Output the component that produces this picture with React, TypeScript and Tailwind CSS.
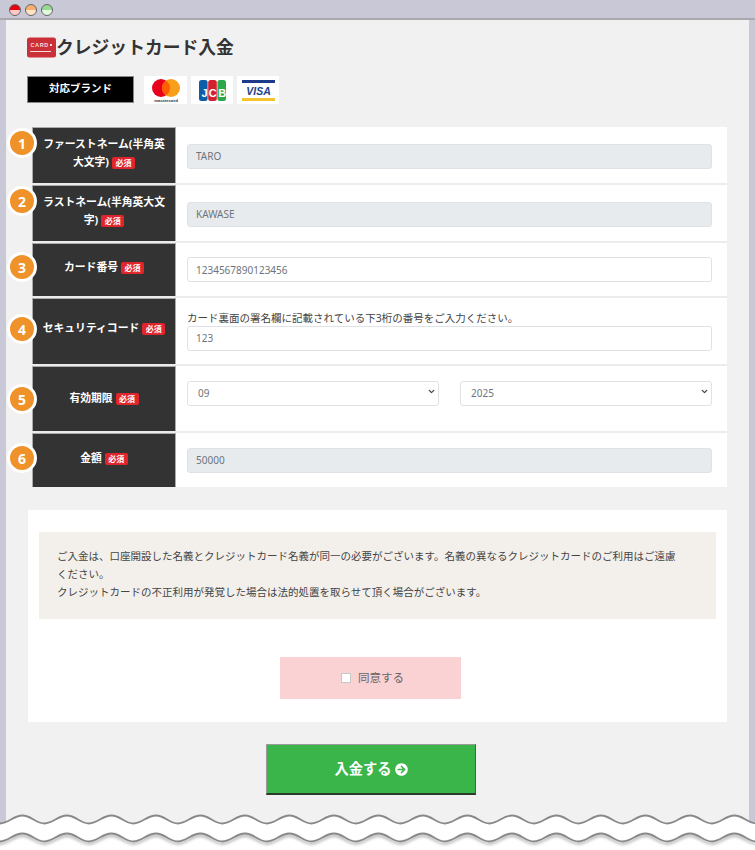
import { FaArrowCircleRight } from "react-icons/fa";
import { LuChevronDown } from "react-icons/lu";

function Req() {
  return (
    <span className="inline-block align-middle ml-[3px] rounded-[2px] bg-[#e0262c] text-white text-[8px] leading-[12px] h-[12px] px-[3.5px] font-bold">
      必須
    </span>
  );
}

function Num({ n, top }: { n: number; top: string }) {
  return (
    <div
      className={`absolute left-[-25px] ${top} w-[30px] h-[30px] rounded-full bg-[#ef9229] border-[3px] border-white flex items-center justify-center text-white text-[14px] font-bold`}
    >
      {n}
    </div>
  );
}

function Row({
  n,
  h,
  top,
  shift,
  contentClass = "",
  label,
  children,
}: {
  n: number;
  h: string;
  top: string;
  shift: string;
  contentClass?: string;
  label: React.ReactNode;
  children: React.ReactNode;
}) {
  return (
    <div className={`relative flex ${h} bg-white border-b-2 last:border-b-0 border-[#ececec]`}>
      <div className="w-[144px] shrink-0 bg-[#333333] border-l border-t border-r border-[#aaaaaa] flex items-center justify-center text-center text-white text-[10.8px] leading-[18px] font-bold px-[8px]">
        <div className={shift}>{label}</div>
      </div>
      <div className={`flex-1 flex flex-col justify-center pl-[11px] pr-[15px] ${contentClass}`}>{children}</div>
      <Num n={n} top={top} />
    </div>
  );
}

function Field({ value, disabled }: { value: string; disabled?: boolean }) {
  return (
    <input
      readOnly
      value={value}
      disabled={disabled}
      className={`w-full h-[25px] rounded-[3px] border border-[#dfe3e7] px-[8px] text-[10px] text-[#6c757d] outline-none ${
        disabled ? "bg-[#e8ebee]" : "bg-white"
      }`}
    />
  );
}

function Sel({ value }: { value: string }) {
  return (
    <div className="relative w-[252px] h-[25px]">
      <select
        defaultValue={value}
        className="w-full h-full appearance-none rounded-[3px] border border-[#dfe3e7] bg-white pl-[10px] text-[10px] text-[#6c757d] outline-none"
      >
        <option>{value}</option>
      </select>
      <LuChevronDown className="absolute right-[3px] top-[8px] text-[9px] text-[#444]" strokeWidth={3.5} />
    </div>
  );
}

function Logo({ children, w }: { children: React.ReactNode; w: string }) {
  return <div className={`${w} h-[28px] bg-white flex items-center justify-center`}>{children}</div>;
}

const period = 44.5;
function wavePath(y: number) {
  let d = `M-44.5 ${y}`;
  for (let i = -1; i < 18; i++) {
    const x = i * period;
    d += ` C${x - 36} ${y} ${x - 31} ${y - 8} ${x - 22} ${y - 8}`;
    d += ` C${x - 13} ${y - 8} ${x - 9} ${y} ${x} ${y}`;
  }
  return d;
}

export default function App() {
  const w1 = wavePath(823.5);
  const w2 = wavePath(841.5);
  return (
    <div
      className="relative w-full h-[850px] overflow-hidden bg-[#c8c8d6] text-[#444]"
      style={{ fontFamily: '"Noto Sans", "Noto Sans CJK JP", sans-serif' }}
    >
      <div className="h-[20px] flex items-start gap-[4px] pl-[9px] pt-[4px] border-b-2 border-[#a9a9ad]">
        <span className="w-[12px] h-[12px] rounded-full border border-[#666] bg-linear-to-b from-[#e8000e] from-45% to-[#ffc9c9] to-55%" />
        <span className="w-[12px] h-[12px] rounded-full border border-[#666] bg-linear-to-b from-[#f5b070] from-45% to-[#ffe4c8] to-55%" />
        <span className="w-[12px] h-[12px] rounded-full border border-[#666] bg-linear-to-b from-[#95d995] from-45% to-[#e2f8de] to-55%" />
      </div>

      <div className="mx-[6px] h-[830px] bg-[#f1f1f1] pl-[21px] pr-[22px] pt-[16px]">
        <div className="flex items-center h-[22px] text-[17.8px] font-bold text-[#333] leading-none">
          <svg width="29" height="21" viewBox="0 0 29 21" className="shrink-0">
            <rect x="0" y="0.5" width="29" height="20" rx="2.5" fill="#cb2f37" />
            <text x="3.5" y="10" fontSize="5.5" fill="#f7dcdc" letterSpacing="0.6" fontFamily="Liberation Sans">
              CARD
            </text>
            <rect x="23" y="7" width="2" height="2" fill="#f7dcdc" />
            <rect x="3" y="14" width="21" height="1" fill="#f7dcdc" />
          </svg>
          <span className="pt-[1px]">クレジットカード入金</span>
        </div>

        <div className="flex mt-[18px] h-[28px]">
          <div className="w-[107px] h-[27px] pb-[2px] bg-black border border-[#888] text-white text-[10.5px] font-bold flex items-center justify-center">
            対応ブランド
          </div>
          <div className="flex ml-[10px] gap-[4px]">
            <Logo w="w-[43px]">
              <svg width="30" height="24" viewBox="0 0 30 24" className="mt-[1px]">
                <circle cx="10" cy="9" r="9" fill="#e8001c" />
                <circle cx="20" cy="9" r="9" fill="#f79e1b" />
                <path d="M15 1.5a9 9 0 0 1 0 15a9 9 0 0 1 0-15z" fill="#ff5f00" />
                <text x="15" y="23" textAnchor="middle" fontSize="4.4" fill="#333" fontFamily="Liberation Sans" fontWeight="bold">
                  mastercard
                </text>
              </svg>
            </Logo>
            <Logo w="w-[42px]">
              <svg width="27" height="21" viewBox="0 0 27 21">
                <rect x="0" y="0" width="8.6" height="21" rx="2.5" fill="#0d5ea8" />
                <rect x="9.2" y="0" width="8.6" height="21" rx="2.5" fill="#d3202f" />
                <rect x="18.4" y="0" width="8.6" height="21" rx="2.5" fill="#2ba84a" />
                <text x="2.4" y="17" fontSize="11" fill="#fff" fontFamily="Liberation Sans" fontWeight="bold">J</text>
                <text x="9.8" y="17" fontSize="11" fill="#fff" fontFamily="Liberation Sans" fontWeight="bold">C</text>
                <text x="19.3" y="17" fontSize="11" fill="#fff" fontFamily="Liberation Sans" fontWeight="bold">B</text>
              </svg>
            </Logo>
            <Logo w="w-[42px]">
              <svg width="33" height="21" viewBox="0 0 33 21">
                <rect x="0" y="0" width="33" height="3" fill="#1e3a8a" />
                <rect x="0" y="18" width="33" height="3" fill="#f4c430" />
                <text x="16.5" y="14.5" textAnchor="middle" fontSize="10.5" fill="#1e3f8a" fontFamily="Liberation Sans" fontWeight="bold" fontStyle="italic">
                  VISA
                </text>
              </svg>
            </Logo>
          </div>
        </div>

        <div className="mt-[23px] ml-[5px]">
          <Row n={1} h="h-[58px]" top="top-[1px]" shift="-translate-y-[3px]" contentClass="pt-[2px]" label={<>ファーストネーム(半角英大文字)<Req /></>}>
            <Field value="TARO" disabled />
          </Row>
          <Row n={2} h="h-[58px]" top="top-[1px]" shift="-translate-y-[3px]" contentClass="pt-[2px]" label={<>ラストネーム(半角英大文字)<Req /></>}>
            <Field value="KAWASE" disabled />
          </Row>
          <Row n={3} h="h-[55px]" top="top-[9px]" shift="-translate-y-[3px]" label={<>カード番号<Req /></>}>
            <Field value="1234567890123456" />
          </Row>
          <Row n={4} h="h-[68px]" top="top-[16px]" shift="-translate-y-[4px]" label={<>セキュリティコード<Req /></>}>
            <p className="text-[10.5px] leading-[14px] text-[#444] mb-[1px] -mt-[1px]">
              カード裏面の署名欄に記載されている下3桁の番号をご入力ください。
            </p>
            <Field value="123" />
          </Row>
          <Row n={5} h="h-[67px]" top="top-[18px]" shift="-translate-y-[1px]" contentClass="pb-[14px]" label={<>有効期限<Req /></>}>
            <div className="flex justify-between">
              <Sel value="09" />
              <Sel value="2025" />
            </div>
          </Row>
          <Row n={6} h="h-[54px]" top="top-[10px]" shift="-translate-y-[3px]" label={<>金額<Req /></>}>
            <Field value="50000" disabled />
          </Row>
        </div>

        <div className="mt-[23px] ml-[1px] h-[212px] bg-white pt-[22px] pl-[11px] pr-[11px]">
          <div className="h-[87px] bg-[#f3f0eb] pl-[18px] pr-[32px] pt-[15px] text-[10.5px] leading-[18px] text-[#444]">
            ご入金は、口座開設した名義とクレジットカード名義が同一の必要がございます。名義の異なるクレジットカードのご利用はご遠慮ください。
            <br />
            クレジットカードの不正利用が発覚した場合は法的処置を取らせて頂く場合がございます。
          </div>
          <label className="mt-[38px] ml-[241px] w-[181px] h-[42px] bg-[#fbd2d4] pl-[4px] flex items-center justify-center gap-[7px] text-[11.5px] text-[#666]">
            <input type="checkbox" className="w-[10px] h-[10px] appearance-none bg-white border border-[#c8c8c8]" />
            同意する
          </label>
        </div>

        <button className="mt-[22px] ml-[239px] w-[210px] h-[51px] bg-[#39b54a] border border-[#999] border-b-2 border-b-[#2a3a2c] border-r-[#555] text-white text-[14.3px] font-bold flex items-center justify-center gap-[3px]">
          入金する
          <FaArrowCircleRight className="text-[13px]" />
        </button>
      </div>

      <svg className="absolute left-0 top-0 pointer-events-none" width="755" height="850" viewBox="0 0 755 850">
        <defs>
          <filter id="s" x="-5%" y="-100%" width="110%" height="300%">
            <feDropShadow dx="0" dy="2" stdDeviation="1.5" floodColor="#000" floodOpacity="0.4" />
          </filter>
        </defs>
        <path d={`${w1} L800 850 L-50 850 Z`} fill="#fff" />
        <path d={w1} fill="none" stroke="#888" strokeWidth="1.8" />
        <path d={w2} fill="none" stroke="#888" strokeWidth="1.8" filter="url(#s)" />
      </svg>
    </div>
  );
}
